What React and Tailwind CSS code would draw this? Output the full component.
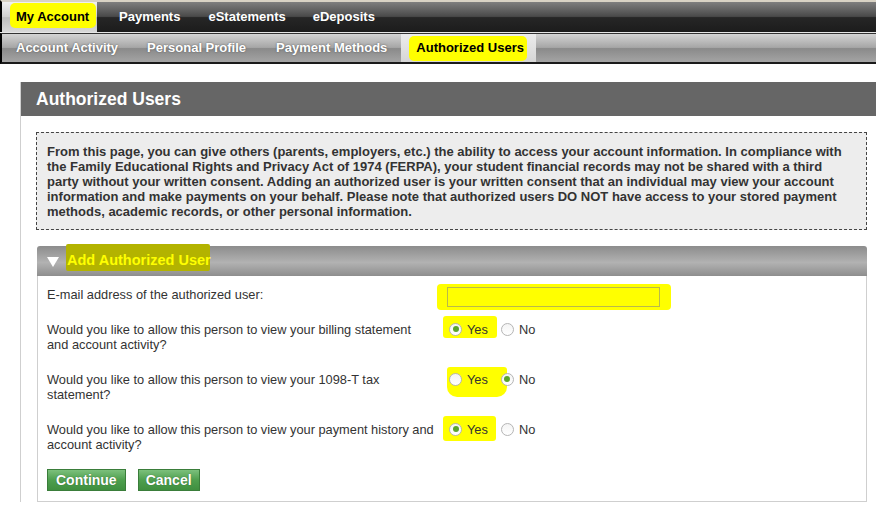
import { useState } from 'react';

const topTabs = ['My Account', 'Payments', 'eStatements', 'eDeposits'];
const subTabs = ['Account Activity', 'Personal Profile', 'Payment Methods', 'Authorized Users'];

function Radio({ checked }) {
  return (
    <span className="inline-flex w-[13px] h-[13px] rounded-full border border-[#b5b5b5] bg-[linear-gradient(#f4f4f4,#ffffff)] items-center justify-center shrink-0">
      {checked && <span className="w-[6px] h-[6px] rounded-full bg-[#5ba52b]" />}
    </span>
  );
}

function Highlight({ className }) {
  return <span className={`absolute bg-[#ffff00] rounded-[3px] ${className}`} />;
}

function YesNo({ value, hl }) {
  return (
    <div className="relative flex items-center h-[20px]">
      <Highlight className={hl} />
      <label className="relative flex items-center gap-[5px] ml-[2px]">
        <Radio checked={value === 'yes'} />
        <span>Yes</span>
      </label>
      <label className="relative flex items-center gap-[5px] ml-[13px]">
        <Radio checked={value === 'no'} />
        <span>No</span>
      </label>
    </div>
  );
}

export default function App() {
  const [email] = useState('');

  const questions = [
    { lines: ['Would you like to allow this person to view your billing statement', 'and account activity?'], value: 'yes', hl: 'left-[-4px] top-[-3px] w-[54px] h-[22px]' },
    { lines: ['Would you like to allow this person to view your 1098-T tax', 'statement?'], value: 'no', hl: 'left-[0px] top-[-2px] w-[60px] h-[30px] rounded-b-[10px]' },
    { lines: ['Would you like to allow this person to view your payment history and', 'account activity?'], value: 'yes', hl: 'left-[-4px] top-[-3px] w-[53px] h-[25px]' },
  ];

  const topGap = ['', 'ml-[22px]', 'ml-[28px]', 'ml-[27px]'];
  const subGap = ['ml-[14px]', 'ml-[29px]', 'ml-[30px]'];

  return (
    <div className="w-[876px] h-[510px] overflow-hidden bg-white font-['Liberation_Sans',Arial,sans-serif] text-[13px] text-[#333]">
      {/* Top nav */}
      <div className="h-[32px] border-t-[2px] border-[#d8d2c4] border-l-[2px] border-l-black bg-[linear-gradient(#7e7e7e,#4a4a4a_48%,#262626_52%,#1c1c1c)] flex items-stretch">
        {topTabs.map((t, i) =>
          i === 0 ? (
            <div key={t} className="relative w-[95px] bg-[linear-gradient(#f0f0f0,#cfcfcf_50%,#bdbdbd_52%,#d8d8d8)] flex items-center">
              <Highlight className="left-[8px] top-[1px] w-[86px] h-[25px] rounded-[5px]" />
              <span className="relative ml-[14px] font-bold text-[13px] text-black">{t}</span>
            </div>
          ) : (
            <div key={t} className={`flex items-center font-bold text-[13px] text-white ${topGap[i]}`}>
              {t}
            </div>
          )
        )}
      </div>
      <div className="h-px bg-[#e6e6e6]" />
      {/* Sub nav */}
      <div className="h-[31px] border-l-[2px] border-l-black border-b-[2px] border-b-[#1a1a1a] border-t border-t-[#333] bg-[linear-gradient(#d4d4d4,#a6a6a6_48%,#8a8a8a_52%,#a4a4a4)] flex items-stretch">
        {subTabs.map((t, i) =>
          i === 3 ? (
            <div key={t} className="relative ml-[14px] w-[135px] bg-[linear-gradient(#ececec,#d6d6d6)] flex items-center">
              <Highlight className="left-[8px] top-[2px] w-[118px] h-[25px] rounded-[5px]" />
              <span className="relative ml-[15px] font-bold text-[13px] text-black">{t}</span>
            </div>
          ) : (
            <div key={t} className={`flex items-center font-bold text-[13px] text-white [text-shadow:0_0_2px_#555] ${subGap[i]}`}>
              {t}
            </div>
          )
        )}
      </div>

      {/* Main panel */}
      <div className="ml-[20px] mt-[18px] w-[862px] border-l border-[#cfcfcf]">
        <div className="h-[34px] bg-[#666] flex items-center pl-[15px] text-white font-bold text-[17.5px]">Authorized Users</div>
        <div className="px-[15px] pt-[16px]">
          <div className="border border-dashed border-[#444] bg-[#ededed] pl-[10px] pr-[14px] pt-[11px] pb-[10px] font-bold leading-[15px]">
            From this page, you can give others (parents, employers, etc.) the ability to access your account information. In compliance with the Family Educational Rights and Privacy Act of 1974 (FERPA), your student financial records may not be shared with a third party without your written consent. Adding an authorized user is your written consent that an individual may view your account information and make payments on your behalf. Please note that authorized users DO NOT have access to your stored payment methods, academic records, or other personal information.
          </div>

          {/* Accordion */}
          <div className="mt-[16px] ml-px">
            <div className="h-[30px] rounded-t-[3px] bg-[linear-gradient(#8c8c8c,#b2b2b2_55%,#8e8e8e)] flex items-center pl-[10px]">
              <svg width="12" height="10" viewBox="0 0 12 10" className="mt-[2px]">
                <path d="M0 0 H12 L6 10 Z" fill="#fff" />
              </svg>
              <div className="relative ml-[8px]">
                <span className="absolute left-[-1px] top-[-6px] w-[144px] h-[27px] bg-[#b3b300] rounded-[2px]" />
                <span className="relative font-bold text-[14.5px] text-[#ffff00]">Add Authorized User</span>
              </div>
            </div>
            <div className="border border-t-0 border-[#cfcfcf] px-[9px] pt-[11px] pb-[10px] text-[12.8px]">
              <div className="flex items-start leading-[15px]">
                <div className="w-[400px]">E-mail address of the authorized user:</div>
                <div className="relative">
                  <span className="absolute left-[-10px] top-[-3px] w-[234px] h-[26px] bg-[#ffff00] rounded-[4px]" />
                  <input value={email} readOnly className="relative block w-[213px] h-[20px] border border-[#b9b94a] bg-transparent outline-none" />
                </div>
              </div>
              {questions.map((q, i) => (
                <div key={i} className={`flex items-start leading-[15px] ${i === 0 ? 'mt-[15px]' : 'mt-[20px]'}`}>
                  <div className="w-[400px] whitespace-nowrap">
                    {q.lines[0]}
                    <br />
                    {q.lines[1]}
                  </div>
                  <div className="-mt-[3px]">
                    <YesNo value={q.value} hl={q.hl} />
                  </div>
                </div>
              ))}
              <div className="flex gap-[12px] mt-[17px]">
                <button className="h-[22px] px-[8px] bg-[linear-gradient(#7cc07c,#4e9f4e_50%,#3f8f3f)] border border-[#3a7d3a] text-white font-bold text-[14px] [text-shadow:0_0_1px_#2b5e2b]">Continue</button>
                <button className="h-[22px] px-[7px] bg-[linear-gradient(#7cc07c,#4e9f4e_50%,#3f8f3f)] border border-[#3a7d3a] text-white font-bold text-[14px] [text-shadow:0_0_1px_#2b5e2b]">Cancel</button>
              </div>
            </div>
          </div>
        </div>
      </div>
    </div>
  );
}
